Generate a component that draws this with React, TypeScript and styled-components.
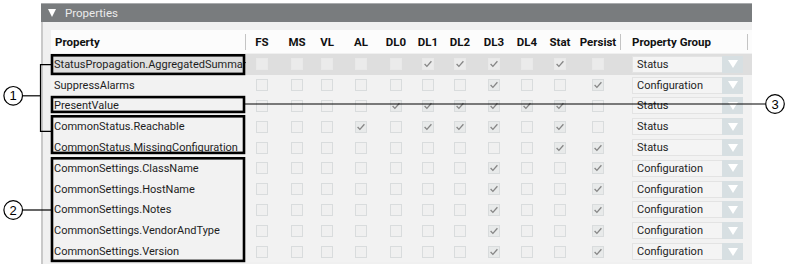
import React from "react";
import styled, { createGlobalStyle } from "styled-components";

const GlobalStyle = createGlobalStyle`
  html, body { margin: 0; padding: 0; background: #ffffff; }
  body { font-family: Roboto, "Noto Sans", "Liberation Sans", sans-serif; }
  * { box-sizing: border-box; }
`;

const COLS = ["FS", "MS", "VL", "AL", "DL0", "DL1", "DL2", "DL3", "DL4", "Stat", "Persist"];
const WIDTHS = [32, 38, 22, 46, 24, 40, 24, 44, 22, 44, 32];
const TEMPLATE = `195px ${WIDTHS.map((w) => `${w}px`).join(" ")} 138px`;

type RowData = { name: string; checks: string[]; group: string; selected?: boolean };

const settings = (name: string): RowData => ({
  name,
  checks: ["DL3", "Persist"],
  group: "Configuration",
});

const ROWS: RowData[] = [
  { name: "StatusPropagation.AggregatedSummary", checks: ["DL1", "DL2", "DL3", "Stat"], group: "Status", selected: true },
  { name: "SuppressAlarms", checks: ["DL3", "Persist"], group: "Configuration" },
  { name: "PresentValue", checks: ["DL0", "DL1", "DL2", "DL3", "DL4", "Stat"], group: "Status" },
  { name: "CommonStatus.Reachable", checks: ["AL", "DL1", "DL2", "DL3", "Stat"], group: "Status" },
  { name: "CommonStatus.MissingConfiguration", checks: ["Stat", "Persist"], group: "Status" },
  settings("CommonSettings.ClassName"),
  settings("CommonSettings.HostName"),
  settings("CommonSettings.Notes"),
  settings("CommonSettings.VendorAndType"),
  settings("CommonSettings.Version"),
];

const Page = styled.div`
  position: relative;
  width: 788px;
  height: 267px;
  padding: 3px 0 0 41px;
  overflow: hidden;
`;

const Panel = styled.section`
  width: 711px;
  display: flex;
  flex-direction: column;
`;

const PanelHeader = styled.div`
  height: 19px;
  background: #797c7e;
  border-top: 1px solid #a9abad;
  display: flex;
  align-items: center;
  gap: 9px;
  padding-left: 7px;
  color: #ebebeb;
  font-size: 11.5px;
`;

const Caret = styled.span`
  width: 0;
  height: 0;
  border-left: 4.5px solid transparent;
  border-right: 4.5px solid transparent;
  border-top: 8px solid #ffffff;
`;

const PanelBody = styled.div`
  background: #f0f0f0;
  border-left: 2px solid #c9c9c9;
  padding: 8px 0 2px 8px;
  height: 242px;
`;

const Table = styled.div`
  display: flex;
  flex-direction: column;
`;

const HeaderRow = styled.div`
  display: grid;
  grid-template-columns: ${TEMPLATE};
  height: 23px;
  margin-bottom: 1px;
  background: #fcfcfc;
  align-items: center;
  font-weight: 700;
  font-size: 11.5px;
  color: #111;
`;

const HeadCell = styled.div<{ $align?: "left" | "center" }>`
  position: relative;
  height: 100%;
  display: flex;
  align-items: center;
  justify-content: ${(p) => (p.$align === "left" ? "flex-start" : "center")};
  white-space: nowrap;
`;

const PropertyHead = styled(HeadCell)`
  padding-left: 4px;
  &::after {
    content: "";
    position: absolute;
    right: 0;
    top: 4px;
    bottom: 3px;
    width: 1px;
    background: #c4c4c4;
  }
`;

const GroupHead = styled(HeadCell)`
  padding-left: 18px;
  &::before,
  &::after {
    content: "";
    position: absolute;
    top: 4px;
    bottom: 3px;
    width: 1px;
    background: #c4c4c4;
  }
  &::before { left: 6px; }
  &::after { left: 133px; }
`;

const Row = styled.div<{ $selected?: boolean }>`
  display: grid;
  grid-template-columns: ${TEMPLATE};
  height: 20.8px;
  align-items: center;
  background: ${(p) => (p.$selected ? "#dedede" : "#f2f2f2")};
  font-size: 11px;
  color: #1e1e1e;
`;

const NameCell = styled.div`
  padding-left: 3px;
  white-space: nowrap;
  overflow: hidden;
  padding-right: 2px;
`;

const BoxCell = styled.div`
  display: flex;
  justify-content: center;
  align-items: center;
`;

const Box = styled.span<{ $checked: boolean; $selected?: boolean }>`
  width: 12px;
  height: 12px;
  display: flex;
  align-items: center;
  justify-content: center;
  border: 1px solid ${(p) => (p.$selected ? "#e9e9e9" : "#d9dcdd")};
  background: ${(p) => (p.$selected ? "#ebebeb" : p.$checked ? "#e8eaea" : "#f0f0f0")};
`;

const GroupCell = styled.div`
  padding-left: 18px;
  display: flex;
  align-items: center;
`;

const Select = styled.div`
  width: 111px;
  height: 17px;
  display: flex;
`;

const SelectText = styled.div`
  flex: 1;
  background: #f4f4f4;
  border: 1px solid #e3e3e3;
  border-right: none;
  padding-left: 4px;
  display: flex;
  align-items: center;
  font-size: 11px;
  color: #1e1e1e;
`;

const SelectArrow = styled.div`
  width: 21px;
  background: #d7dfe2;
  display: flex;
  align-items: center;
  justify-content: center;
  &::after {
    content: "";
    width: 0;
    height: 0;
    border-left: 5.5px solid transparent;
    border-right: 5.5px solid transparent;
    border-top: 8px solid #ffffff;
  }
`;

const Overlay = styled.svg`
  position: absolute;
  left: 0;
  top: 0;
  pointer-events: none;
`;

const Check = () => (
  <svg width="10" height="10" viewBox="0 0 10 10">
    <polyline points="1.6,5 3.9,7.4 8.4,2.2" fill="none" stroke="#868686" strokeWidth="1.3" />
  </svg>
);

const Callout = ({ cx, cy, n }: { cx: number; cy: number; n: string }) => (
  <g>
    <circle cx={cx} cy={cy} r={9.3} fill="#fff" stroke="#000" strokeWidth={1.2} />
    <text
      x={cx}
      y={cy + 4.6}
      textAnchor="middle"
      fontSize="13"
      fontFamily="'Liberation Sans', Arial, sans-serif"
      fill="#000"
    >
      {n}
    </text>
  </g>
);

export default function App() {
  return (
    <>
      <GlobalStyle />
      <Page>
        <Panel>
          <PanelHeader>
            <Caret />
            <span>Properties</span>
          </PanelHeader>
          <PanelBody>
            <Table>
              <HeaderRow>
                <PropertyHead $align="left">Property</PropertyHead>
                {COLS.map((c) => (
                  <HeadCell key={c}>{c}</HeadCell>
                ))}
                <GroupHead $align="left">Property Group</GroupHead>
              </HeaderRow>
              {ROWS.map((r) => (
                <Row key={r.name} $selected={r.selected}>
                  <NameCell>{r.name}</NameCell>
                  {COLS.map((c) => {
                    const on = r.checks.includes(c);
                    return (
                      <BoxCell key={c}>
                        <Box $checked={on} $selected={r.selected}>
                          {on && <Check />}
                        </Box>
                      </BoxCell>
                    );
                  })}
                  <GroupCell>
                    <Select>
                      <SelectText>{r.group}</SelectText>
                      <SelectArrow />
                    </Select>
                  </GroupCell>
                </Row>
              ))}
            </Table>
          </PanelBody>
        </Panel>
        <Overlay width="788" height="267" viewBox="0 0 788 267">
          <g fill="none" stroke="#000" strokeWidth={2.6}>
            <rect x={52} y={55.3} width={192} height={18.6} />
            <rect x={52} y={97.1} width={192} height={14.8} />
            <rect x={52} y={116.3} width={192} height={36.6} />
            <rect x={52} y={158.3} width={192} height={102.6} />
          </g>
          <g fill="none" stroke="#000" strokeWidth={1.2}>
            <path d="M51 64.7 H40.5 V131.3 H51" />
            <path d="M22.5 95.8 H40.5" />
            <path d="M22.5 210 H51" />
            <path d="M245 104 H765.5" />
          </g>
          <Callout cx={13.2} cy={95.8} n="1" />
          <Callout cx={13.2} cy={210} n="2" />
          <Callout cx={775} cy={104} n="3" />
        </Overlay>
      </Page>
    </>
  );
}
